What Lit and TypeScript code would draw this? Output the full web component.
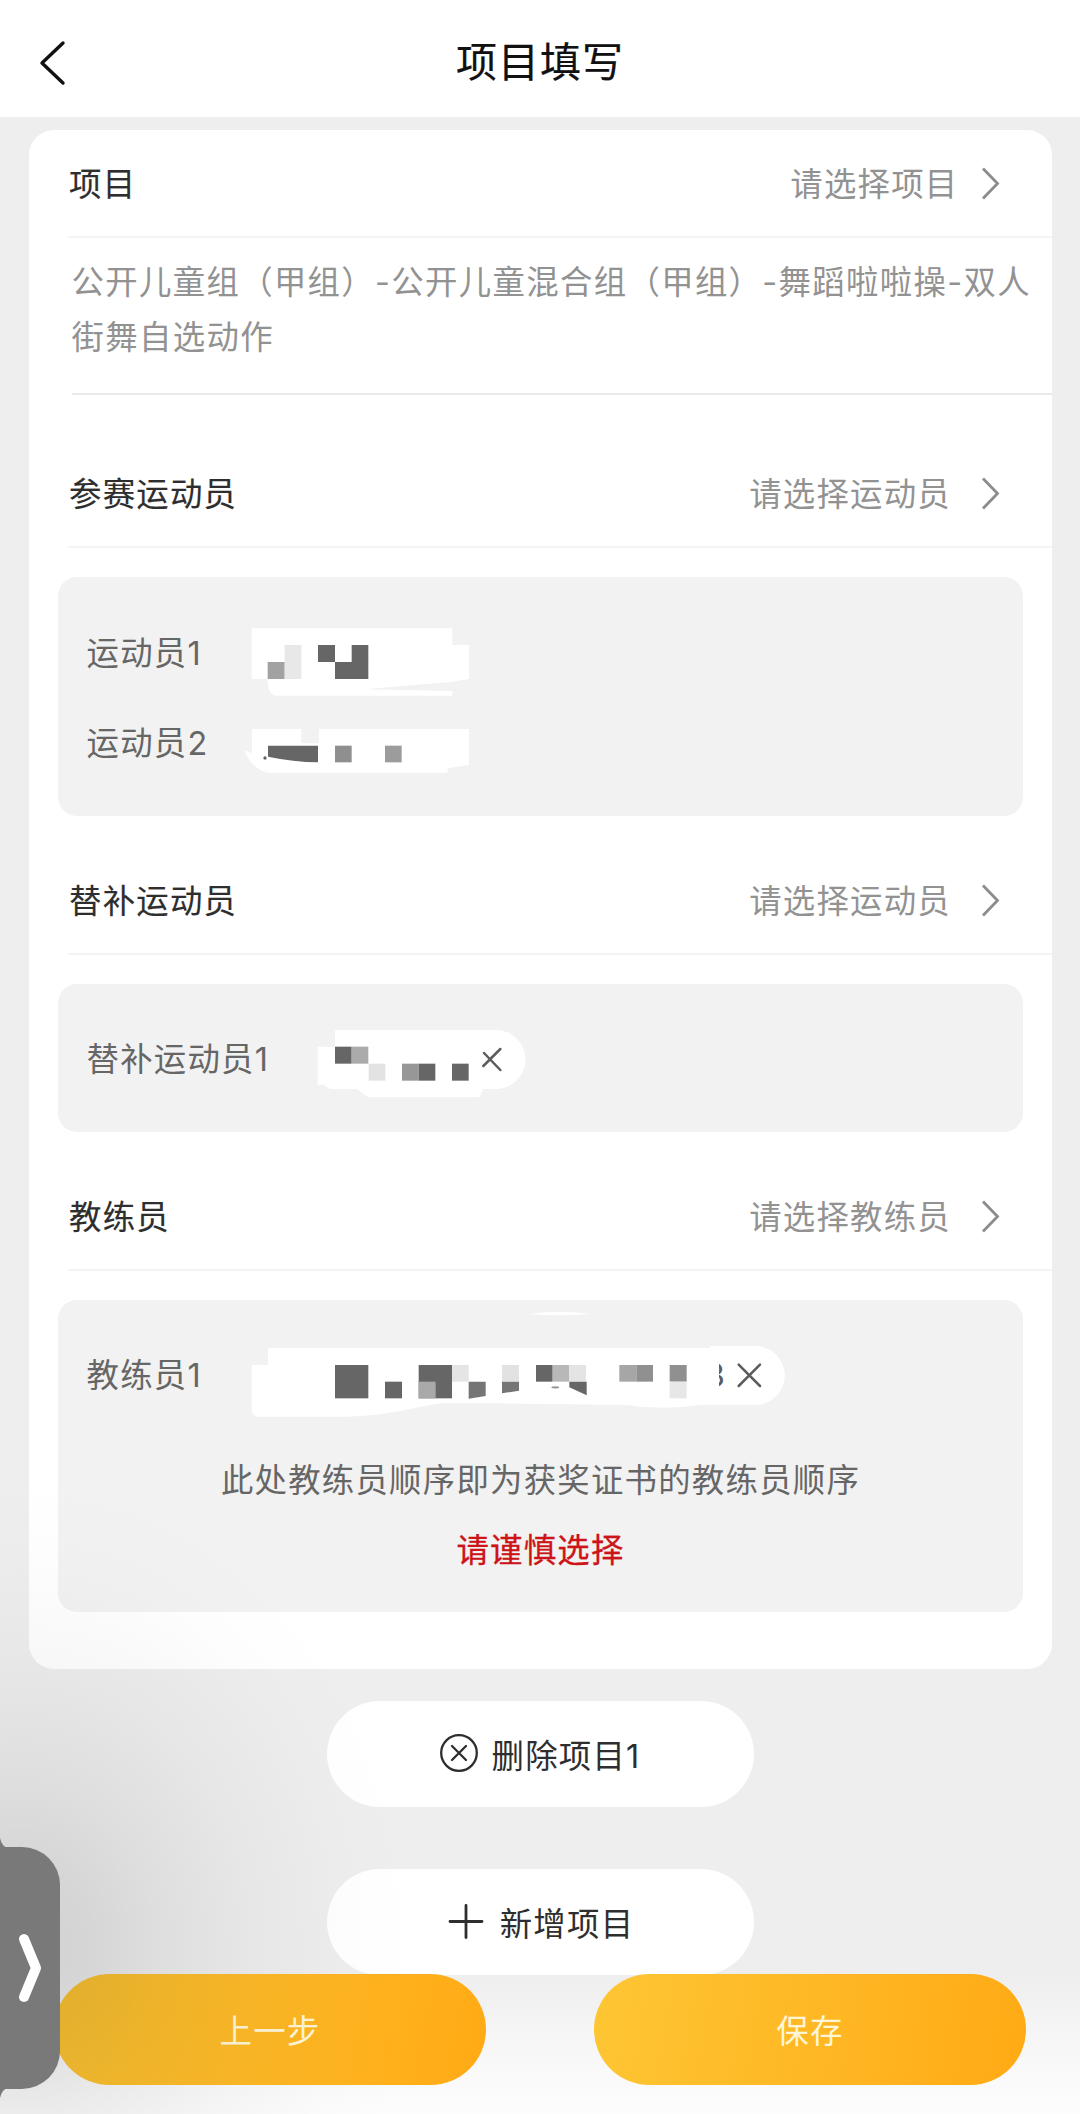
import { LitElement, html, svg, css } from "lit";
import { customElement } from "lit/decorators.js";

type Block = [x: number, y: number, w: number, h: number, fill: string];

const DARK = "#666";

const blocks = (list: Block[]) =>
  list.map(([x, y, w, h, fill]) => svg`<rect x=${x} y=${y} width=${w} height=${h} fill=${fill} />`);

const chevron = html`<svg class="chevron" width="22" height="36" viewBox="0 0 22 36">
  <path d="M3 3.5 L17.5 18.5 L3 33.5" fill="none" stroke="#8c8c8c" stroke-width="2.8" />
</svg>`;

@customElement("app-root")
export class AppRoot extends LitElement {
  static styles = css`
    :host {
      display: block;
      font-family: "Inter", "Noto Sans CJK SC", sans-serif;
      font-size: 32.4px;
      letter-spacing: 1.25px;
      color: #2e2e2e;
    }
    * { box-sizing: border-box; }
    svg { display: block; flex: none; }
    .page {
      position: relative;
      height: 2114px;
      overflow: hidden;
      background: #eee;
      display: flex;
      flex-direction: column;
      align-items: center;
    }
    .header {
      align-self: stretch;
      height: 117px;
      background: #fff;
      display: grid;
      grid-template-columns: 100px 1fr 100px;
      align-items: center;
      padding-top: 8px;
      flex: none;
    }
    .back { margin-left: 37px; }
    .title {
      margin: 0;
      text-align: center;
      font-size: 41px;
      letter-spacing: 1px;
      font-weight: 400;
      line-height: 60px;
      padding-bottom: 2px;
      color: #111;
      -webkit-text-stroke: 0.2px #111;
    }
    .card {
      width: 1023px;
      height: 1539px;
      margin: 13px 0 0 0;
      background: #fff;
      border-radius: 25px;
      flex: none;
      display: flex;
      flex-direction: column;
    }
    .row {
      margin-left: 39.5px;
      height: 108px;
      border-bottom: 2px solid #f4f4f4;
      display: flex;
      align-items: center;
      padding-right: 49.5px;
      flex: none;
    }
    .name, .pick { padding-bottom: 3px; }
    .name { flex: 1; padding-left: 1px; -webkit-text-stroke: 0.15px #2e2e2e; }
    .pick { color: #929292; }
    .chevron { margin-left: 29px; }
    .row.wide .chevron { margin-left: 21.5px; }
    .desc {
      margin: 0 0 0 43px;
      height: 157px;
      padding: 17px 4px 0 0;
      line-height: 55.4px;
      letter-spacing: 1.34px;
      color: #929292;
      border-bottom: 2px solid #e9e9e9;
      flex: none;
    }
    .panel {
      margin: 29px 29px 0;
      padding: 30px 28px 0 29px;
      background: #f2f2f2;
      border-radius: 19px;
      color: #666;
      flex: none;
    }
    .panel.two { height: 239px; }
    .panel.one { height: 148px; padding-top: 29px; }
    .panel.coach { height: 312px; padding-top: 29px; }
    .gap { flex: none; }
    .gap.s31 { height: 31px; }
    .gap.s45 { height: 45px; }
    .person { display: flex; align-items: center; height: 90px; }
    .label { width: 153px; flex: none; white-space: nowrap; padding-bottom: 4px; }
    .label.long { width: 223px; }
    .mask { overflow: visible; }
    .note, .warn { text-align: center; line-height: 70px; }
    .note { margin-top: 27px; }
    .warn { color: #cd1418; -webkit-text-stroke: 0.3px #cd1418; }
    .pill {
      width: 427px;
      height: 106px;
      border: 0;
      border-radius: 53px;
      background: #fff;
      font: inherit;
      letter-spacing: inherit;
      color: #2e2e2e;
      display: flex;
      align-items: center;
      justify-content: center;
      flex: none;
    }
    .pill span { padding-bottom: 2px; }
    .delete { margin-top: 32px; gap: 13px; padding: 0 1px 0 0; }
    .add { margin-top: 62px; gap: 16px; padding: 0 0 0 2px; }
    .footer {
      align-self: stretch;
      height: 141px;
      margin-top: -1px;
      padding: 0 54px;
      display: flex;
      justify-content: space-between;
      align-items: flex-start;
      flex: none;
      position: relative;
    }
    .fade {
      position: absolute;
      left: 0;
      right: 0;
      bottom: 0;
      height: 141px;
      background: linear-gradient(#eeeeee00, #f6f6f6 45%, #fdfdfd);
    }
    .action {
      position: relative;
      width: 432px;
      height: 111px;
      border: 0;
      border-radius: 56px;
      background: linear-gradient(100deg, #fec634, #ffaa15);
      color: #fff6d8;
      font: inherit;
      letter-spacing: inherit;
      padding: 0 0 3px;
    }
    .shade {
      position: absolute;
      left: 0;
      top: 1440px;
      width: 460px;
      height: 674px;
      background: radial-gradient(
        ellipse 400px 480px at 20px 510px,
        rgba(0, 0, 0, 0.12),
        rgba(0, 0, 0, 0.1) 18%,
        rgba(0, 0, 0, 0.068) 35%,
        rgba(0, 0, 0, 0.032) 58%,
        rgba(0, 0, 0, 0.009) 82%,
        rgba(0, 0, 0, 0)
      );
    }
    .handle {
      position: absolute;
      left: -60px;
      top: 1847px;
      width: 120px;
      height: 242px;
      border-radius: 38px;
      background: #797979;
    }
    .handle svg { margin: 84px 0 0 76px; }
    .flare {
      position: absolute;
      left: 0;
      top: 1838px;
    }
  `;

  private row(name: string, pick: string, extra = "") {
    return html`<div class="row ${extra}">
      <span class="name">${name}</span><span class="pick">${pick}</span>${chevron}
    </div>`;
  }

  render() {
    return html`<div class="page">
      <header class="header">
        <svg class="back" width="32" height="48" viewBox="0 0 32 48">
          <path d="M26 4 L5 24 L26 44" fill="none" stroke="#111" stroke-width="3.4" stroke-linecap="round" stroke-linejoin="round" />
        </svg>
        <h1 class="title">项目填写</h1>
      </header>

      <section class="card">
        ${this.row("项目", "请选择项目", "wide")}
        <p class="desc">公开儿童组（甲组）-公开儿童混合组（甲组）-舞蹈啦啦操-双人街舞自选动作</p>
        <div class="gap s45"></div>
        ${this.row("参赛运动员", "请选择运动员")}
        <div class="panel two">
          <div class="person">
            <span class="label">运动员1</span>
            <svg class="mask" width="240" height="90" viewBox="30 -9 720 270">
              <path fill="#fff" d="M65 55H667V105H717V207L667 215L405 238L667 243V257H135Q113 252 113 207H65Z" />
              ${blocks([
                [113, 156, 51, 51, "#a2a2a2"],
                [164, 105, 50, 102, "#e8e8e8"],
                [264, 105, 51, 51, DARK],
                [315, 156, 100, 51, DARK],
                [365, 105, 50, 52, DARK],
              ])}
            </svg>
          </div>
          <div class="person">
            <span class="label">运动员2</span>
            <svg class="mask" width="240" height="90" viewBox="30 261 720 270">
              <path fill="#fff" d="M66 357H214V400H267V357H717V465L653 475V488H110Q65 475 42 420L66 430Z" />
              <path fill=${DARK} d="M114 407H264V457Q190 456 114 440Z" />
              <circle cx="105" cy="444" r="5" fill=${DARK} />
              ${blocks([
                [315, 407, 50, 50, "#8f8f8f"],
                [465, 407, 50, 50, "#9c9c9c"],
              ])}
            </svg>
          </div>
        </div>

        <div class="gap s31"></div>
        ${this.row("替补运动员", "请选择运动员")}
        <div class="panel one">
          <div class="person">
            <span class="label long">替补运动员1</span>
            <svg class="mask" width="220" height="90" viewBox="30 9 660 270">
              <path fill="#fff" d="M105 60H588A88 88 0 0 1 588 237H550L538 262H205L170 237H90L70 225H53V110H105Z" />
              ${blocks([
                [105, 110, 50, 51, DARK],
                [155, 110, 50, 51, "#ababab"],
                [206, 161, 50, 51, "#e3e3e3"],
                [306, 161, 50, 51, "#979797"],
                [356, 161, 50, 51, DARK],
                [456, 161, 50, 51, DARK],
              ])}
              <path d="M601 117L550 168M552 129L601 180" fill="none" stroke="#5c5c5c" stroke-width="7.5" stroke-linecap="round" />
            </svg>
          </div>
        </div>

        <div class="gap s31"></div>
        ${this.row("教练员", "请选择教练员")}
        <div class="panel coach">
          <div class="person">
            <span class="label">教练员1</span>
            <svg class="mask" width="560" height="90" viewBox="30 117 1680 270">
              <defs><clipPath id="cut"><rect x="1467" y="200" width="40" height="110" /></clipPath></defs>
              <path fill="#fff" d="M900 72Q980 58 1080 72Q980 80 900 72Z" />
              <path fill="#fff" d="M114 174H1440V168H1576A88 88 0 0 1 1576 345H1410Q1300 362 1190 345L800 340H640C560 348 480 380 340 380H80Q65 375 65 360V225H114Z" />
              ${blocks([
                [315, 225, 100, 100, DARK],
                [465, 275, 51, 50, DARK],
                [566, 225, 100, 100, DARK],
                [566, 275, 51, 50, "#a9a9a9"],
                [666, 225, 50, 50, "#e5e5e5"],
                [816, 225, 51, 50, "#e2e2e2"],
                [918, 225, 50, 50, DARK],
                [968, 225, 50, 50, "#b8b8b8"],
                [1018, 225, 50, 50, "#e4e4e4"],
                [1168, 225, 51, 50, "#a6a6a6"],
                [1219, 225, 50, 50, "#909090"],
                [1319, 225, 51, 50, "#909090"],
                [1319, 275, 51, 50, "#e7e7e7"],
              ])}
              <path fill="#757575" d="M716 275H767V318L716 326ZM816 275H867V302L816 310Z" />
              <path fill=${DARK} d="M1018 275H1070V316L1018 292Z" />
              <ellipse cx="976" cy="292" rx="12" ry="3.5" fill="#999" />
              <text x="1424" y="292" font-size="98" fill="#5c5c5c" clip-path="url(#cut)">3</text>
              <path d="M1526 224L1590 288M1590 224L1526 288" fill="none" stroke="#5c5c5c" stroke-width="7.5" stroke-linecap="round" />
            </svg>
          </div>
          <div class="note">此处教练员顺序即为获奖证书的教练员顺序</div>
          <div class="warn">请谨慎选择</div>
        </div>
      </section>

      <button class="pill delete">
        <svg width="40" height="40" viewBox="0 0 40 40" fill="none" stroke="#2e2e2e" stroke-width="2.3" stroke-linecap="round">
          <circle cx="20" cy="19" r="17.8" />
          <path d="M13 12L27 26M27 12L13 26" />
        </svg>
        <span>删除项目1</span>
      </button>
      <button class="pill add">
        <svg width="36" height="36" viewBox="0 0 36 36" fill="none" stroke="#2e2e2e" stroke-width="2.8" stroke-linecap="round">
          <path d="M18 1.5V33.5M2 17.5H34" />
        </svg>
        <span>新增项目</span>
      </button>

      <footer class="footer">
        <div class="fade"></div>
        <button class="action">上一步</button>
        <button class="action">保存</button>
      </footer>

      <div class="shade"></div>
      <div class="handle">
        <svg width="28" height="76" viewBox="0 0 28 76">
          <path d="M8 8L20 37L8 66" fill="none" stroke="#fff" stroke-width="10" stroke-linecap="round" stroke-linejoin="round" />
        </svg>
      </div>
      <svg class="flare" width="8" height="260" viewBox="0 0 8 260">
        <path d="M0 0Q2 9 8 10H0ZM0 260Q2 251 8 250H0Z" fill="#797979" />
      </svg>
    </div>`;
  }
}
